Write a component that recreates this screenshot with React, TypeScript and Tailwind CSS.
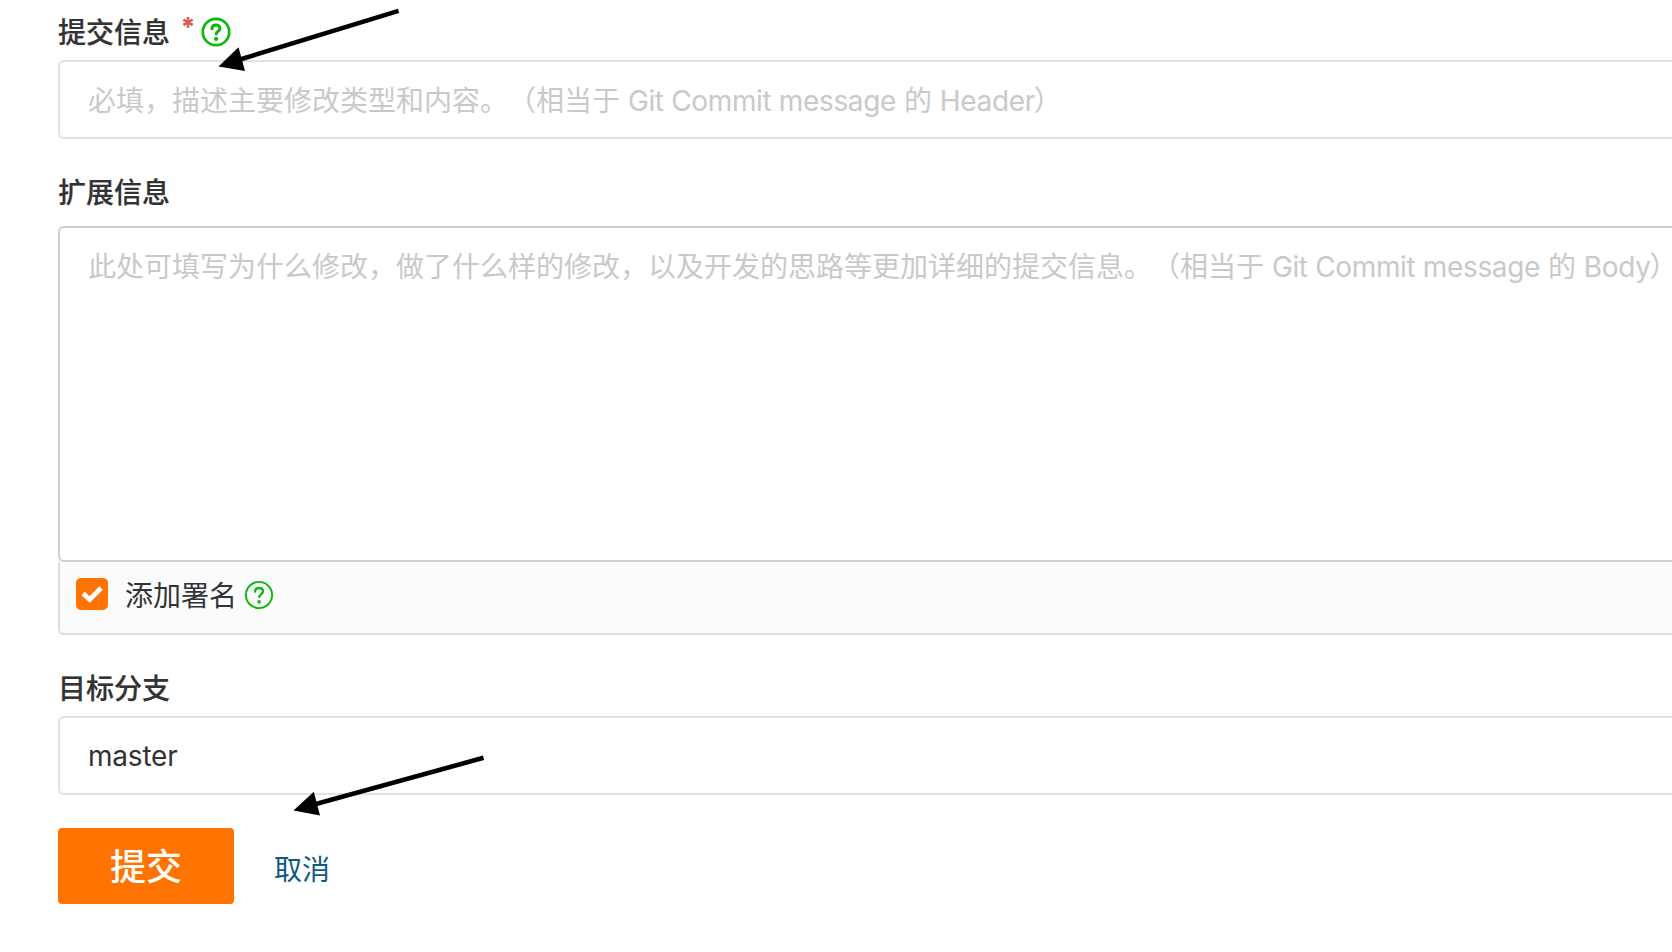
import type { ReactNode } from "react";

function HelpIcon({ bold = false }: { bold?: boolean }) {
  return (
    <svg
      viewBox="0 0 30 30"
      className="block size-[30px] shrink-0"
      fill="none"
      stroke="#0ab80f"
      strokeLinecap="round"
      strokeLinejoin="round"
    >
      <circle cx="15" cy="15" r={bold ? 13.2 : 13.1} strokeWidth={bold ? 2.7 : 1.9} />
      <path
        d="M11 11.700c0-2.300 1.700-3.700 4-3.700s4 1.400 4 3.500c0 2.700-3.800 2.900-3.800 5.500"
        strokeWidth={bold ? 3 : 2.3}
      />
      <circle cx="15.1" cy="21.9" r={bold ? 2.1 : 1.8} fill="#0ab80f" stroke="none" />
    </svg>
  );
}

function Label({ children }: { children: ReactNode }) {
  return (
    <label className="block text-[28px] leading-[42px] font-medium text-[#333] [-webkit-text-stroke:0.2px_#333]">
      {children}
    </label>
  );
}

function Latin({ children }: { children: ReactNode }) {
  return <span className="tracking-[-0.35px]">{children}</span>;
}

function CloseParen() {
  return <span className="-ml-px [font-feature-settings:'halt']">）</span>;
}

function Arrow({ className, line, head }: { className: string; line: string; head: string }) {
  return (
    <svg className={className} viewBox="0 0 200 70" width="200" height="70">
      <path d={line} stroke="#000" strokeWidth="4.6" />
      <path d={head} fill="#000" />
    </svg>
  );
}

export default function App() {
  return (
    <div className="relative h-[952px] w-full overflow-hidden bg-white pt-3 pl-[58px] font-['Inter','Noto_Sans_CJK_SC',sans-serif] whitespace-nowrap [text-spacing-trim:space-all]">
      <div className="flex h-12 items-start">
        <Label>提交信息</Label>
        <span className="-mt-px ml-[9px] w-[18px] text-center font-['Inter',sans-serif] text-[26px] leading-8 font-extrabold text-[#db5a5a]">
          *
        </span>
        <span className="mt-[4.500px] ml-[3.500px]">
          <HelpIcon bold />
        </span>
      </div>
      <div className="flex h-[79px] items-center rounded-l-[6px] border-2 border-r-0 border-[#dee1e6] pt-0.5 pl-7 text-[28px] text-[#c9c9c9]">
        <span>
          必填，描述主要修改类型和内容。（相当于 <Latin>Git Commit message</Latin> 的 <Latin>Header</Latin>
          <CloseParen />
        </span>
      </div>

      <div className="mt-[33px] h-[54px]">
        <Label>扩展信息</Label>
      </div>
      <div className="bg-[#fbfbfb]">
        <div className="h-[336px] rounded-l-[6px] border-2 border-r-0 border-[#cccfd9] bg-white pt-[19px] pl-7 text-[28px] leading-10 text-[#c9c9c9]">
          此处可填写为什么修改，做了什么样的修改，以及开发的思路等更加详细的提交信息。（相当于{" "}
          <Latin>Git Commit message</Latin> 的 <Latin>Body</Latin>
          <CloseParen />
        </div>
      </div>
      <div className="flex h-[73px] items-start rounded-bl-[6px] border-b-2 border-l-2 border-[#dcdddf] bg-[#fbfbfb] pt-4 pl-4">
        <span className="flex size-8 items-center justify-center rounded-[5px] bg-[#ff7300]">
          <svg viewBox="0 0 32 32" className="size-8" fill="none" stroke="#fff" strokeWidth="4.8">
            <path d="M7 15.400l6.700 6.100L25 10" strokeLinejoin="miter" />
          </svg>
        </span>
        <span className="-mt-[2px] ml-[17px] text-[28px] leading-10 text-[#333]">添加署名</span>
        <span className="mt-[1.5px] ml-[6.500px]">
          <HelpIcon />
        </span>
      </div>

      <div className="mt-[33px] h-12">
        <Label>目标分支</Label>
      </div>
      <div className="flex h-[79px] items-center rounded-l-[6px] border-2 border-r-0 border-[#dee1e6] pt-px pl-7 text-[28px] tracking-[-0.2px] text-[#333]">
        master
      </div>

      <div className="mt-[33px] flex items-center">
        <button className="h-[76px] w-[176px] rounded-[4px] bg-[#ff7300] pt-0.5 text-[36px] leading-none font-medium text-white">
          提交
        </button>
        <a className="mt-2 ml-10 text-[28px] leading-10 text-[#10597f]">取消</a>
      </div>

      <Arrow
        className="absolute top-[5px] left-[210px]"
        line="M188.500 5.900L30 54.500"
        head="M8.500 61.500L28.500 42.200L35 66Z"
      />
      <Arrow
        className="absolute top-[750px] left-[285px]"
        line="M198.500 7.800L30 54.200"
        head="M8.500 60.600L28.800 41.800L35 65.600Z"
      />
    </div>
  );
}
